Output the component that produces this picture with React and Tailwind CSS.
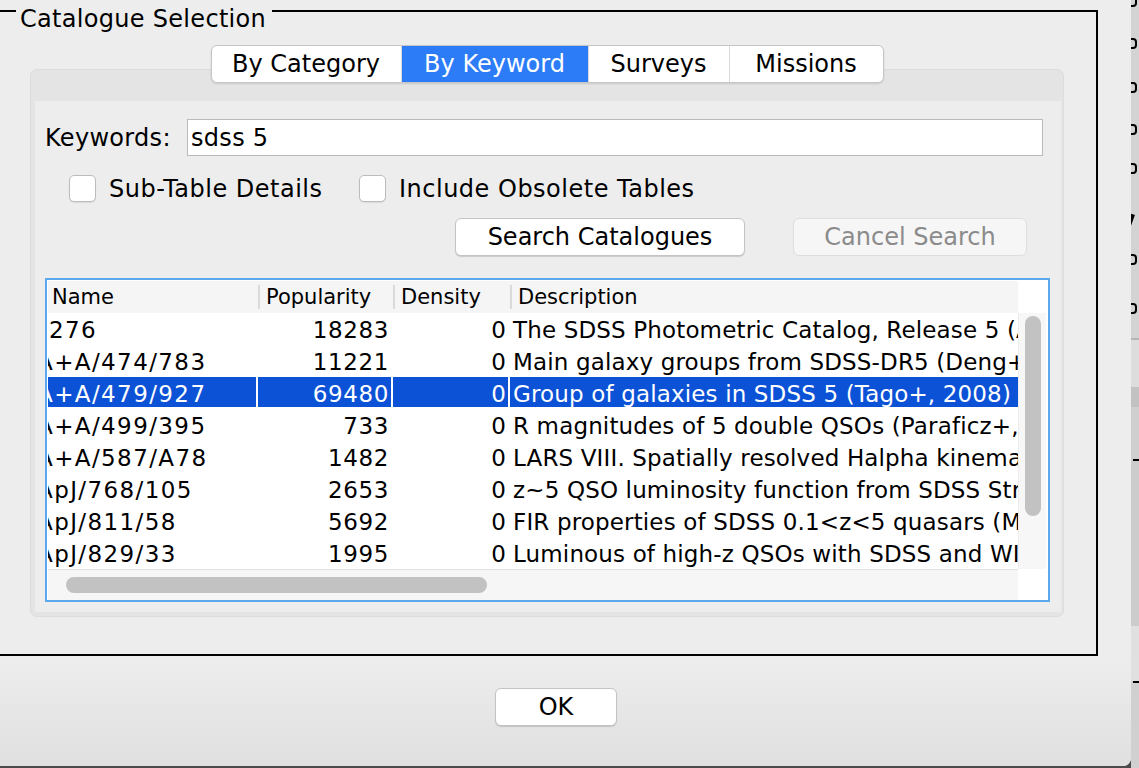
// Catalogue selection dialog (Swing-like window, keyword search tab)
const rows = [
  { name: '276', clip: false, pop: 18283, desc: 'The SDSS Photometric Catalog, Release 5 (Adelman-McCarthy+, 2007)' },
  { name: 'A+A/474/783', clip: true, pop: 11221, desc: 'Main galaxy groups from SDSS-DR5 (Deng+, 2007)' },
  { name: 'A+A/479/927', clip: true, pop: 69480, desc: 'Group of galaxies in SDSS 5 (Tago+, 2008)', selected: true },
  { name: 'A+A/499/395', clip: true, pop: 733, desc: 'R magnitudes of 5 double QSOs (Paraficz+, 2009)' },
  { name: 'A+A/587/A78', clip: true, pop: 1482, desc: 'LARS VIII. Spatially resolved Halpha kinematics (Herenz+, 2016)' },
  { name: 'ApJ/768/105', clip: true, pop: 2653, desc: 'z~5 QSO luminosity function from SDSS Stripe 82 (McGreer+, 2013)' },
  { name: 'ApJ/811/58', clip: true, pop: 5692, desc: 'FIR properties of SDSS 0.1<z<5 quasars (Ma+, 2015)' },
  { name: 'ApJ/829/33', clip: true, pop: 1995, desc: 'Luminous of high-z QSOs with SDSS and WISE (Wang+, 2016)' },
];

const tabs = [
  { label: 'By Category', w: 'w-[189px]' },
  { label: 'By Keyword', w: 'w-[187px]', active: true },
  { label: 'Surveys', w: 'w-[141px]' },
  { label: 'Missions', w: 'w-[154px]' },
];

const Checkbox = ({ label, w }) => (
  <div className={`flex shrink-0 items-center ${w}`}>
    <span className="h-[27px] w-[27px] shrink-0 rounded-[5px] border border-[#bcbcbc] bg-white shadow-[0_1px_1px_rgba(0,0,0,0.08)]" />
    <span className="ml-[13px] whitespace-nowrap text-[24px] leading-[28px] tracking-[0.5px] text-black">{label}</span>
  </div>
);

const HeaderCell = ({ w, label, first }) => (
  <div className={`flex h-full items-center ${w}`}>
    {!first && <span className="h-[24px] w-[2px] shrink-0 bg-[#dadada]" />}
    <span className={first ? 'pl-[4px]' : 'pl-[6px]'}>{label}</span>
  </div>
);

const StripMark = ({ className = '' }) => (
  <span className={`ml-[-6px] block h-[11px] w-[12px] rounded-[4px] border-2 border-black ${className}`} />
);

const RightStrip = () => (
  <div className="flex h-[768px] w-[8px] flex-col overflow-hidden bg-[#cdcdcd]">
    <div className="flex h-[338px] flex-col bg-[#d3d3d3]">
      <StripMark className="mt-[-4px]" />
      <StripMark className="mt-[31px]" />
      <StripMark className="mt-[33px]" />
      <StripMark className="mt-[31px]" />
      <StripMark className="mt-[28px]" />
      <span className="mt-[40px] ml-[-2px] block h-[12px] w-[4px] rotate-[20deg] bg-black" />
      <StripMark className="mt-[28px]" />
      <StripMark className="mt-[38px]" />
    </div>
    <div className="h-[2px] bg-[#b5b5b5]" />
    <div className="h-[47px] bg-[#dddddd]" />
    <div className="h-[20px] bg-[#c2c2c2]" />
    <div className="h-[52px] bg-[#cfcfcf]" />
    <div className="ml-[2px] h-[2px] bg-black" />
    <div className="h-[165px] bg-[#cccccc]" />
    <div className="h-[55px] bg-[#e0e0e0]" />
    <div className="ml-[2px] h-[2px] bg-black" />
    <div className="flex-1 bg-[#d0d0d0]" />
  </div>
);

export default function App() {
  return (
    <div className="flex h-[768px] w-[1139px] items-start overflow-hidden bg-[#4b4b4b] font-['DejaVu_Sans',sans-serif] text-black">
      <div className="flex h-[766px] w-[1131px] shrink-0 flex-col overflow-hidden rounded-br-[8px] bg-[#ededed]">
        {/* titled border */}
        <div className="relative ml-[-4px] mt-[10px] h-[646px] w-[1102px] shrink-0 border-2 border-black">
          <span className="absolute left-[18px] top-[-7px] bg-[#ededed] pl-[4px] pr-[6px] text-[24px] leading-[28px] tracking-[0.3px]">
            Catalogue Selection
          </span>

          {/* tabs */}
          <div className="relative z-10 ml-[32px] mt-[33px] mb-[-14px] flex w-[1034px] justify-center">
            <div className="flex h-[38px] overflow-hidden rounded-[6px] border border-[#c6c6c6] bg-white shadow-[0_1px_2px_rgba(0,0,0,0.12)]">
              {tabs.map((t, i) => (
                <div
                  key={t.label}
                  className={`flex items-center justify-center text-[24px] leading-[28px] ${t.w} ${
                    i > 0 ? 'border-l border-[#d9d9d9]' : ''
                  } ${t.active ? 'bg-[#2b7cf6] text-white' : 'text-black'}`}
                >
                  {t.label}
                </div>
              ))}
            </div>
          </div>

          {/* tab panel */}
          <div className="ml-[32px] flex h-[548px] w-[1034px] flex-col rounded-[7px] border border-[#dcdcdc] bg-[#e4e4e4] pt-[31px] pl-[4px] pr-[2px] pb-[4px]">
            <div className="flex flex-1 flex-col bg-[#ededed]">
              {/* keywords */}
              <div className="flex items-center pt-[18px] pl-[10px]">
                <span className="w-[142px] text-[24px] leading-[28px] tracking-[0.3px]">Keywords:</span>
                <input
                  readOnly
                  value="sdss 5"
                  className="h-[37px] w-[856px] border border-[#bababa] bg-white pl-[3px] text-[24px] tracking-[0.3px] text-black outline-none"
                />
              </div>

              {/* options */}
              <div className="mt-[19px] flex h-[27px] items-center pl-[34px]">
                <Checkbox w="w-[290px]" label="Sub-Table Details" />
                <Checkbox w="w-[400px]" label="Include Obsolete Tables" />
              </div>

              {/* actions */}
              <div className="mt-[16px] flex justify-end gap-[48px] pr-[34px]">
                <button className="h-[38px] w-[290px] rounded-[6px] border border-[#c4c4c4] bg-white text-[24px] text-black shadow-[0_1px_1px_rgba(0,0,0,0.15)]">
                  Search Catalogues
                </button>
                <button className="h-[38px] w-[234px] rounded-[6px] border border-[#dedede] bg-[#f6f6f6] text-[24px] text-[#8b8b8b]">
                  Cancel Search
                </button>
              </div>

              {/* results table */}
              <div className="mt-[22px] ml-[10px] flex h-[324px] w-[1005px] flex-col border-2 border-[#5ca8ec] bg-white pt-[1px] pl-[1px] pr-[2px]">
                <div className="flex h-[32px]">
                  <div className="flex w-[970px] bg-[#f5f5f5] text-[21px] leading-[26px]">
                    <HeaderCell first w="w-[210px]" label="Name" />
                    <HeaderCell w="w-[135px]" label="Popularity" />
                    <HeaderCell w="w-[117px]" label="Density" />
                    <HeaderCell w="flex-1" label="Description" />
                  </div>
                  <div className="w-[28px] bg-white" />
                </div>

                <div className="flex h-[256px]">
                  <div className="w-[970px] overflow-hidden">
                    {rows.map((r) => {
                      const cell = r.selected ? 'bg-[#0b52d6] text-white' : 'bg-white text-black';
                      return (
                        <div key={r.name} className="flex h-[32px] whitespace-nowrap text-[23px] leading-[28px]">
                          <div className={`flex w-[210px] items-center overflow-hidden border-r-2 border-b-2 border-white pt-[3px] ${cell}`}>
                            <span className={`tracking-[1.4px] ${r.clip ? 'ml-[-11px]' : 'ml-[1px]'}`}>{r.name}</span>
                          </div>
                          <div className={`flex w-[135px] items-center justify-end border-r-2 border-b-2 border-white pt-[3px] pr-[2px] tracking-[0.6px] ${cell}`}>
                            {r.pop}
                          </div>
                          <div className={`flex w-[117px] items-center justify-end border-r-2 border-b-2 border-white pt-[3px] pr-[2px] ${cell}`}>
                            0
                          </div>
                          <div className={`flex w-[508px] items-center overflow-hidden border-b-2 border-white pt-[3px] pl-[3px] tracking-[0.15px] ${cell}`}>
                            {r.desc}
                          </div>
                        </div>
                      );
                    })}
                  </div>
                  <div className="w-[28px] border-l border-[#ececec] bg-[#f7f7f7] pt-[3px] pl-[6px]">
                    <div className="h-[200px] w-[16px] rounded-full bg-[#c2c2c2]" />
                  </div>
                </div>

                <div className="flex h-[31px]">
                  <div className="w-[970px] border-t border-[#e3e3e3] bg-[#f6f6f6] pt-[7px] pl-[18px]">
                    <div className="h-[16px] w-[421px] rounded-full bg-[#c2c2c2]" />
                  </div>
                  <div className="w-[28px] bg-white" />
                </div>
              </div>
            </div>
          </div>
        </div>

        {/* dialog buttons */}
        <div className="flex-1 bg-linear-to-b from-[#ededed] to-[#e0e0e0] pt-[32px]">
          <div className="flex w-[1112px] justify-center">
            <button className="h-[38px] w-[122px] rounded-[6px] border border-[#c4c4c4] bg-white text-[24px] text-black shadow-[0_1px_1px_rgba(0,0,0,0.15)]">
              OK
            </button>
          </div>
        </div>
      </div>
      <RightStrip />
    </div>
  );
}
